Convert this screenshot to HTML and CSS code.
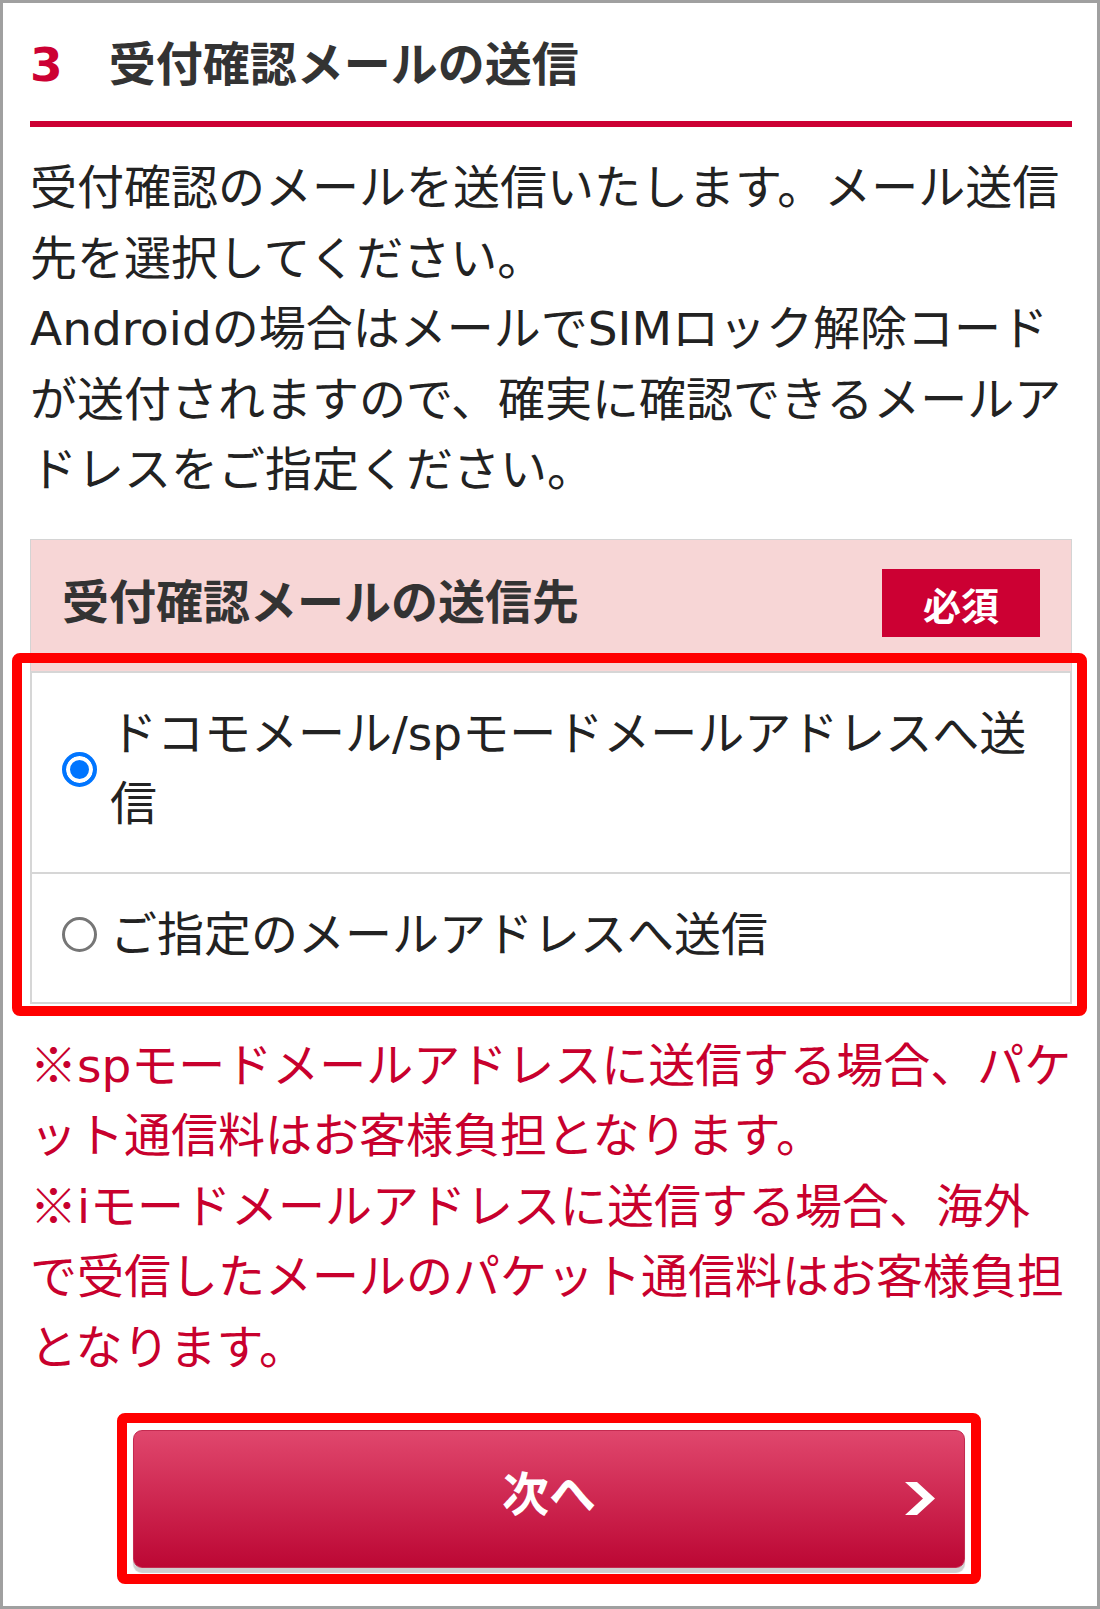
FILE: index.html
```html
<!DOCTYPE html>
<html lang="ja">
<head>
    <meta charset="UTF-8">
    <meta name="viewport" content="width=device-width, initial-scale=1.0">
    <title>受付確認メールの送信</title>
    <link rel="stylesheet" href="styles.css">
</head>
<body>
    <div class="page">
        <h2 class="step-title"><span class="step-num">3</span>受付確認メールの送信</h2>

        <p class="lead">受付確認のメールを送信いたします。メール送信先を選択してください。<br>Androidの場合はメールでSIMロック解除コードが送付されますので、確実に確認できるメールアドレスをご指定ください。</p>

        <div class="field">
            <div class="field-head">
                <span class="field-label">受付確認メールの送信先</span>
                <span class="badge">必須</span>
            </div>
            <div class="field-body">
                <ul class="options">
                    <li>
                        <label class="option">
                            <input type="radio" name="mailto" class="radio" checked>
                            <span class="option-text">ドコモメール/spモードメールアドレスへ送信</span>
                        </label>
                    </li>
                    <li>
                        <label class="option">
                            <input type="radio" name="mailto" class="radio">
                            <span class="option-text">ご指定のメールアドレスへ送信</span>
                        </label>
                    </li>
                </ul>
                <span class="mark"></span>
            </div>
        </div>

        <p class="note"><span class="kome">※</span>spモードメールアドレスに送信する場合、パケット通信料はお客様負担となります。<br><span class="kome">※</span>iモードメールアドレスに送信する場合、海外で受信したメールのパケット通信料はお客様負担となります。</p>

        <div class="next-frame">
            <button type="button" class="next-btn">
                <span class="next-label">次へ</span>
                <svg class="chev" width="30" height="33" viewBox="0 0 30 33"><polygon points="0,0 12,0 30,16.5 12,33 0,33 18,16.5" fill="#fff"/></svg>
            </button>
        </div>
    </div>
</body>
</html>
```

FILE: styles.css
```css
body {
    margin: 0;
    font-family: "DejaVu Sans", "Noto Sans CJK JP", sans-serif;
    color: #222;
}

.page {
    box-sizing: border-box;
    width: 1100px;
    height: 1609px;
    border: 3px solid #a0a0a0;
    padding: 0 25px 0 27px;
    background: #fff;
}

.step-title {
    margin: 27px 0 0;
    padding-bottom: 20px;
    border-bottom: 6px solid #cc0033;
    font-size: 47px;
    line-height: 70.5px;
    font-weight: bold;
    color: #333;
}

.step-num {
    color: #cc0033;
    margin-right: 46px;
}

.lead {
    margin: 26.5px 0 0;
    font-size: 47px;
    line-height: 1.5;
}

.field {
    margin-top: 33.5px;
}

.field-head {
    display: flex;
    justify-content: space-between;
    align-items: center;
    padding: 28px 31px 32px;
    background: #f7d6d6;
    border: 1px solid #d4d4d4;
    border-bottom: none;
}

.field-label {
    font-size: 47px;
    line-height: 70.5px;
    font-weight: bold;
    color: #333;
}

.badge {
    display: flex;
    align-items: center;
    justify-content: center;
    width: 158px;
    height: 68px;
    background: #cc0033;
    color: #fff;
    font-size: 38px;
    font-weight: bold;
}

.field-body {
    position: relative;
}

.options {
    list-style: none;
    margin: 0;
    padding: 0;
    border: 2px solid #d6d6d6;
    background: #fff;
}

.options li + li {
    border-top: 2px solid #d6d6d6;
}

.option {
    display: flex;
    align-items: center;
    gap: 13px;
    padding: 26px 30px 32px;
    font-size: 47px;
    line-height: 1.5;
    cursor: pointer;
}

.option-text {
    flex: 1;
}

.radio {
    appearance: none;
    flex: none;
    box-sizing: border-box;
    width: 35px;
    height: 35px;
    margin: 0;
    border: 3px solid #767676;
    border-radius: 50%;
    background: #fff;
}

.radio:checked {
    border: 4px solid #0075ff;
    background: #0075ff;
    box-shadow: inset 0 0 0 4px #fff;
}

/* red frame drawn over the choices */
.mark {
    position: absolute;
    top: -18px;
    left: -18px;
    right: -15px;
    bottom: -12px;
    border: 10px solid #ff0000;
    border-radius: 8px;
    pointer-events: none;
}

.note {
    margin: 26.5px -2px 0 0;
    font-size: 47px;
    line-height: 1.5;
    color: #c8002d;
}

.kome {
    font-family: "Noto Sans CJK JP", sans-serif;
    line-height: 1;
}

.next-frame {
    box-sizing: border-box;
    width: 864px;
    margin: 29.5px 0 0 87px;
    padding: 7px 6px 6px;
    border: 10px solid #ff0000;
    border-radius: 8px;
}

.next-btn {
    display: grid;
    grid-template-columns: 1fr auto 1fr;
    align-items: center;
    box-sizing: border-box;
    width: 100%;
    height: 138px;
    padding: 0 29px;
    border: 1px solid #c42a50;
    border-radius: 9px;
    background: linear-gradient(#e0476d, #bc0734);
    box-shadow: 0 5px 1px #cfcfcf;
    color: #fff;
    font-family: "Noto Sans CJK JP", sans-serif;
    font-size: 47px;
    font-weight: bold;
    cursor: pointer;
}

.next-label {
    grid-column: 2;
    margin-bottom: 16px;
}

.chev {
    justify-self: end;
}
```
